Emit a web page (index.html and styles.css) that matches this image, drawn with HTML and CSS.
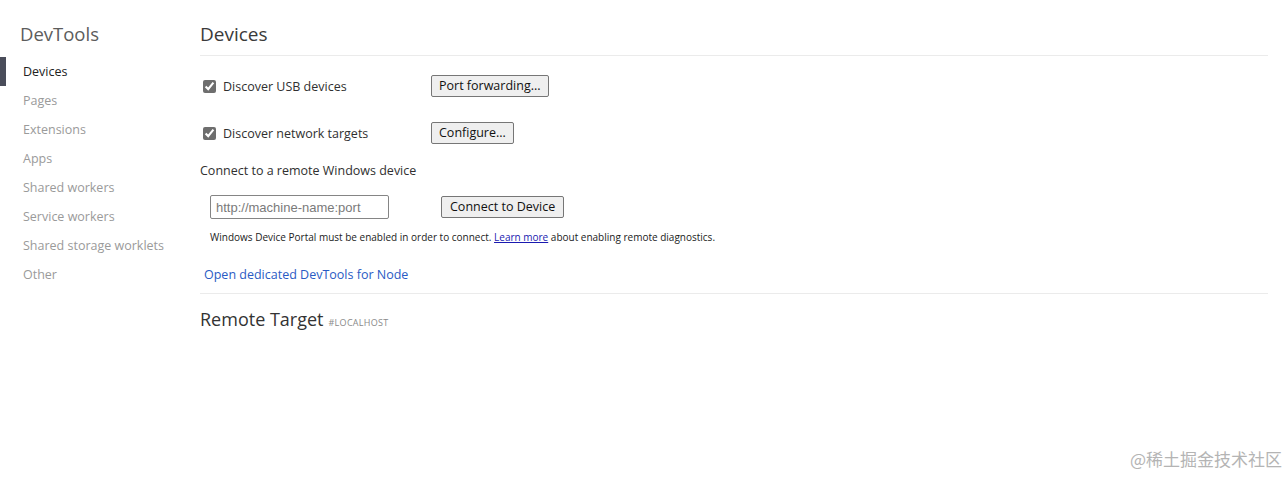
FILE: index.html
```html
<!DOCTYPE html>
<html>
<head>
<meta charset="utf-8">
<title>Inspect with Chrome Developer Tools</title>
<link rel="stylesheet" href="styles.css">
</head>
<body>
<div class="page">
  <aside class="sidebar">
    <h1 class="brand">DevTools</h1>
    <nav class="nav">
      <div class="nav-item active">Devices</div>
      <div class="nav-item">Pages</div>
      <div class="nav-item">Extensions</div>
      <div class="nav-item">Apps</div>
      <div class="nav-item">Shared workers</div>
      <div class="nav-item">Service workers</div>
      <div class="nav-item">Shared storage worklets</div>
      <div class="nav-item">Other</div>
    </nav>
  </aside>
  <main class="content">
    <h2 class="heading">Devices</h2>
    <div class="option-row first">
      <label class="check"><input type="checkbox" checked><span>Discover USB devices</span></label>
      <button class="btn">Port forwarding...</button>
    </div>
    <div class="option-row">
      <label class="check"><input type="checkbox" checked><span>Discover network targets</span></label>
      <button class="btn">Configure...</button>
    </div>
    <div class="remote-title">Connect to a remote Windows device</div>
    <div class="remote-row">
      <input class="remote-input" type="text" placeholder="http://machine-name:port">
      <button class="btn">Connect to Device</button>
    </div>
    <div class="hint">Windows Device Portal must be enabled in order to connect. <a href="#" class="hint-link">Learn more</a> about enabling remote diagnostics.</div>
    <div class="node-link"><a href="#">Open dedicated DevTools for Node</a></div>
    <div class="target">
      <span class="target-name">Remote Target</span>
      <span class="target-host">#LOCALHOST</span>
    </div>
  </main>
</div>
<div class="watermark">@稀土掘金技术社区</div>
</body>
</html>
```
FILE: styles.css
```css
html, body {
  margin: 0;
  padding: 0;
  background: #fff;
}
body {
  font-family: "Open Sans", "Noto Sans", sans-serif;
  font-size: 13px;
  color: #303030;
  position: relative;
  height: 479px;
  overflow: hidden;
}
.page {
  display: flex;
}
.sidebar {
  width: 200px;
  flex: none;
}
.brand {
  margin: 0;
  padding: 21px 0 0 20px;
  height: 36px;
  font-size: 18.5px;
  font-weight: 400;
  line-height: 26px;
  color: #5c5c5c;
}
.nav-item {
  height: 29px;
  line-height: 29px;
  padding-left: 23px;
  color: #9a9a9a;
  font-size: 12.5px;
}
.nav-item.active {
  color: #222;
  box-shadow: inset 6px 0 0 #4a4d5a;
}
.content {
  flex: 1;
  padding-right: 20px;
}
.heading {
  margin: 0;
  padding: 21px 0 0;
  height: 34px;
  font-size: 19px;
  font-weight: 400;
  line-height: 26px;
  color: #3a3a3a;
  border-bottom: 1px solid #ebebeb;
}
.option-row {
  display: flex;
  align-items: center;
  height: 22px;
  margin-top: 25px;
}
.option-row.first {
  margin-top: 19px;
}
.check {
  width: 228px;
  padding-left: 3px;
  display: flex;
  align-items: center;
  gap: 7px;
  font-size: 12.5px;
}
.check input {
  margin: 0;
  width: 13px;
  height: 13px;
  accent-color: #6e6e6e;
}
.btn {
  font-family: inherit;
  font-size: 12.5px;
  color: #111;
  background: #efefef;
  border: 1px solid #767676;
  border-radius: 2px;
  height: 22px;
  padding: 0 7px;
  line-height: 18px;
}
.remote-title {
  margin-top: 17px;
  height: 20px;
  line-height: 20px;
  font-size: 12.5px;
}
.remote-row {
  display: flex;
  align-items: center;
  gap: 52px;
  margin: 14px 0 0 10px;
}
.remote-row .btn {
  padding: 0 8px;
}
.remote-input {
  box-sizing: border-box;
  width: 179px;
  height: 24px;
  margin: 0;
  padding: 0 5px;
  font-family: "Liberation Sans", Arial, sans-serif;
  font-size: 13px;
  border: 1px solid #858585;
  border-radius: 2px;
}
.remote-input::placeholder {
  color: #7a7a7a;
}
.hint {
  margin: 11px 0 0 10px;
  font-size: 10px;
  line-height: 14px;
  color: #222;
}
.hint-link {
  color: #1a1ab0;
}
.node-link {
  margin-top: 23px;
  padding: 0 0 0 4px;
  height: 26px;
  line-height: 16px;
  font-size: 12.5px;
  border-bottom: 1px solid #ebebeb;
}
.node-link a {
  color: #2a5bc4;
  text-decoration: none;
}
.target {
  margin-top: 13px;
  display: flex;
  align-items: baseline;
  gap: 5px;
}
.target-name {
  font-size: 18px;
  color: #333;
}
.target-host {
  font-size: 9px;
  color: #8a8a8a;
  letter-spacing: 0.3px;
}
.watermark {
  position: absolute;
  right: 6px;
  bottom: 8px;
  font-family: "Noto Sans CJK SC", sans-serif;
  font-size: 17px;
  color: #b4b4b4;
}
```
